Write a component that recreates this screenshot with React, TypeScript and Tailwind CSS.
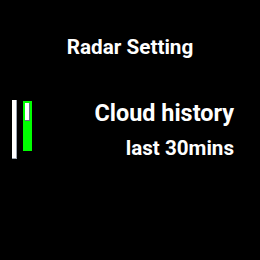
export default function App() {
  return (
    <div
      className="w-[260px] h-[260px] bg-black text-white overflow-hidden flex flex-col"
      style={{ fontFamily: "Roboto, 'Liberation Sans', sans-serif" }}
    >
      <h1 className="mt-[33px] text-center text-[20.7px] font-bold leading-[28px]">Radar Setting</h1>
      <div className="mt-[35px] flex items-start">
        <div className="ml-[12px] mt-[4px] w-[5px] h-[59px] bg-white border-r border-b border-gray-400"></div>
        <div className="ml-[6px] mt-[5px] w-[9px] h-[50px] bg-[#00ff00] pt-[2px] pl-[2px]">
          <div className="w-[5px] h-[18px] bg-white border-r border-b border-gray-500"></div>
        </div>
        <div className="flex-1 flex flex-col items-end pr-[26px] pt-[2px]">
          <div className="text-[23.4px] font-bold leading-[30px]">Cloud history</div>
          <div className="mt-[7px] text-[20.6px] font-bold leading-[26px]">last 30mins</div>
        </div>
      </div>
    </div>
  )
}
